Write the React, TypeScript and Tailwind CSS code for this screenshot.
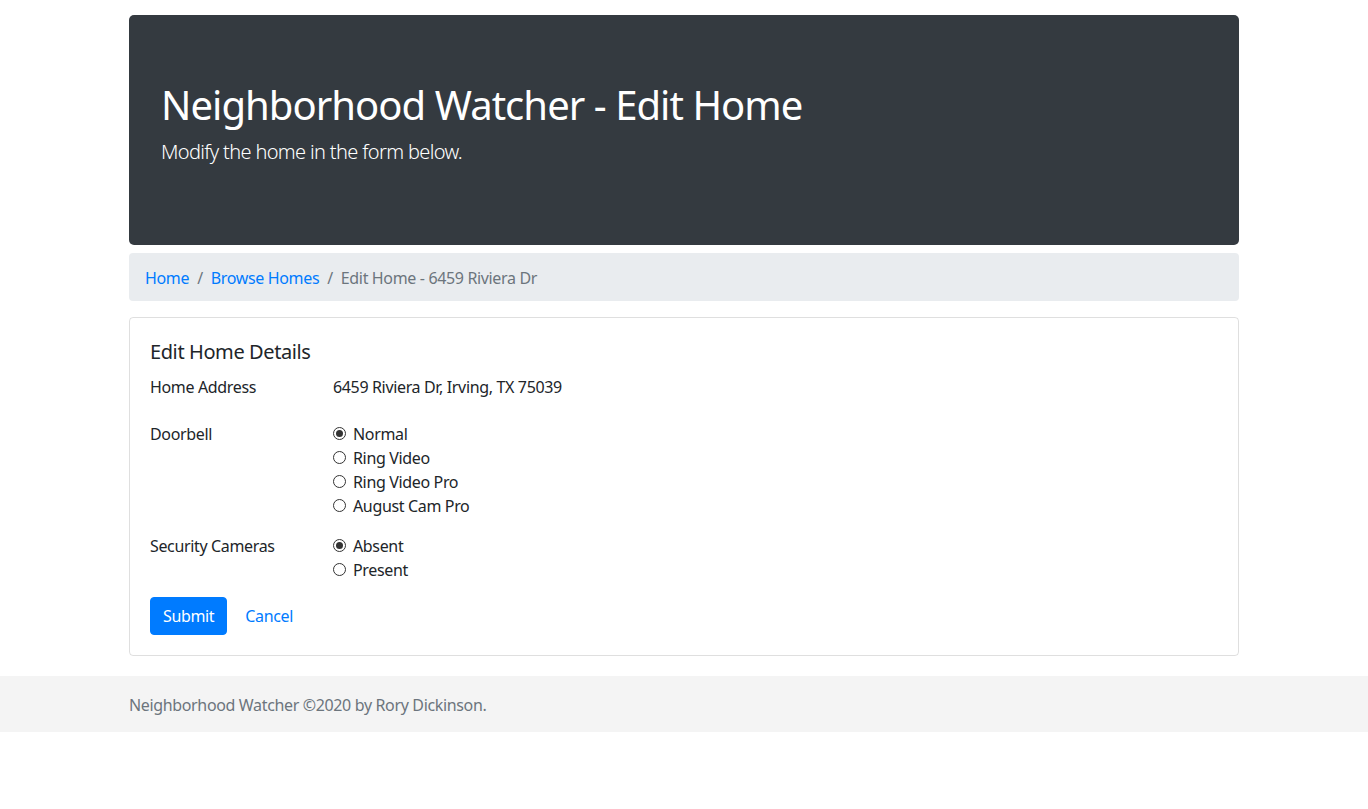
import React from 'react';

type Option = { label: string; checked?: boolean };

function Radio({ label, checked }: Option) {
  return (
    <label className="flex items-start h-6 cursor-pointer">
      <span className="mt-[5px] w-[13px] h-[13px] rounded-full border border-[#333] bg-white flex items-center justify-center shrink-0">
        {checked && <span className="w-[7px] h-[7px] rounded-full bg-[#333]" />}
      </span>
      <span className="ml-[7px]">{label}</span>
    </label>
  );
}

function Row({ label, children, className }: { label: string; children: React.ReactNode; className?: string }) {
  return (
    <div className={`flex ${className ?? ''}`}>
      <div className="w-[183px] shrink-0">{label}</div>
      <div className="flex flex-col">{children}</div>
    </div>
  );
}

export default function App() {
  return (
    <div className="min-h-screen bg-white font-['Noto_Sans',_'Open_Sans',_sans-serif] text-base leading-6 tracking-[-0.35px] text-[#212529]">
      <div className="mx-auto w-[1140px] px-[15px] pt-[15px]">
        <div className="bg-[#343a40] text-white rounded-[5px] px-8 pt-[66px] pb-[62px] mb-2">
          <h1 className="text-[40px] leading-[48px] font-normal mb-2 tracking-[-0.95px]">
            Neighborhood Watcher - Edit Home
          </h1>
          <p className="text-xl leading-[30px] font-light mb-4 tracking-[-0.65px]">
            Modify the home in the form below.
          </p>
        </div>

        <nav className="bg-[#e9ecef] rounded px-4 pt-[13px] pb-[11px] mb-4 flex items-center">
          <a href="#" className="text-[#007bff]">Home</a>
          <span className="px-2 text-[#6c757d]">/</span>
          <a href="#" className="text-[#007bff]">Browse Homes</a>
          <span className="px-2 text-[#6c757d]">/</span>
          <span className="text-[#6c757d]">Edit Home - 6459 Riviera Dr</span>
        </nav>

        <div className="border border-black/[.125] rounded p-5">
          <h5 className="text-xl leading-6 pt-[2px] mb-[10px] tracking-[-0.4px]">Edit Home Details</h5>

          <Row label="Home Address" className="mb-[23px] pt-px">
            <span>6459 Riviera Dr, Irving, TX 75039</span>
          </Row>

          <Row label="Doorbell" className="mb-4">
            <Radio label="Normal" checked />
            <Radio label="Ring Video" />
            <Radio label="Ring Video Pro" />
            <Radio label="August Cam Pro" />
          </Row>

          <Row label="Security Cameras" className="mb-[15px]">
            <Radio label="Absent" checked />
            <Radio label="Present" />
          </Row>

          <div className="flex items-center">
            <button className="bg-[#007bff] text-white border border-[#007bff] rounded px-3 py-[6px] leading-6">
              Submit
            </button>
            <a href="#" className="ml-[6px] px-3 py-[7px] text-[#007bff]">Cancel</a>
          </div>
        </div>
      </div>

      <footer className="mt-5 bg-[#f4f4f4] pt-[17px] pb-[15px]">
        <div className="mx-auto w-[1140px] px-[15px] text-[#6c757d]">
          Neighborhood Watcher ©2020 by Rory Dickinson.
        </div>
      </footer>
    </div>
  );
}
